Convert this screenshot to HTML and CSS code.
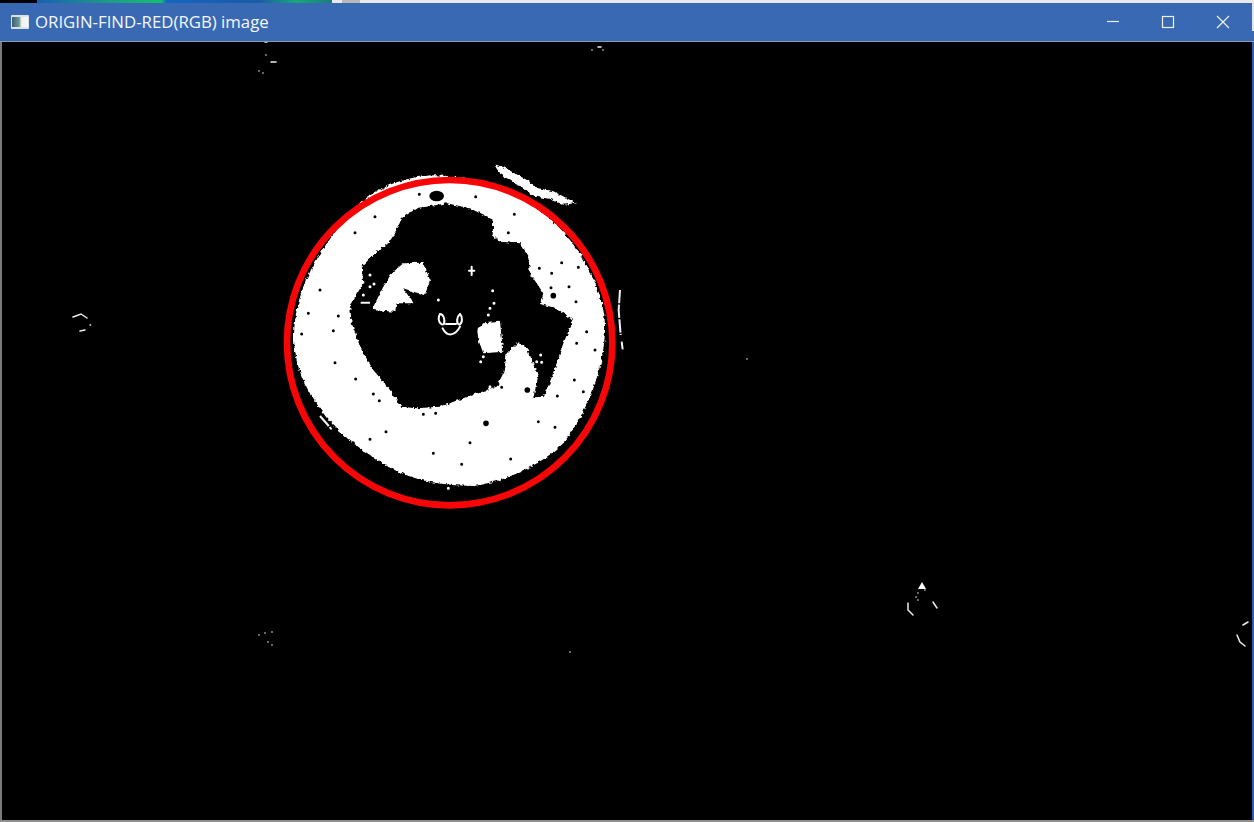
FILE: index.html
```html
<!DOCTYPE html>
<html lang="en">
<head>
<meta charset="utf-8">
<title>ORIGIN-FIND-RED(RGB) image</title>
<link rel="stylesheet" href="styles.css">
</head>
<body>
<div class="screen">
  <div class="backdrop">
    <div class="backdrop-dark"></div>
    <div class="backdrop-plot"></div>
    <div class="backdrop-light"><span class="backdrop-tab"></span></div>
  </div>
  <div class="window">
    <header class="titlebar">
      <svg class="app-icon" viewBox="0 0 18 14" aria-hidden="true">
        <defs>
          <linearGradient id="iconFill" x1="0" x2="1" y1="0" y2="0">
            <stop offset="0" stop-color="#3e5d73"/>
            <stop offset=".45" stop-color="#6f9a94"/>
            <stop offset=".6" stop-color="#eef3ee"/>
            <stop offset="1" stop-color="#f6f8f8"/>
          </linearGradient>
        </defs>
        <rect width="18" height="14" rx="1" fill="#d9e2ea"/>
        <rect x="1" y="2" width="16" height="10" fill="url(#iconFill)"/>
      </svg>
      <span class="title">ORIGIN-FIND-RED(RGB) image</span>
      <div class="controls">
        <span class="control">
          <svg viewBox="0 0 14 14" aria-hidden="true"><path class="glyph" d="M1 6.5H13"/></svg>
        </span>
        <span class="control">
          <svg viewBox="0 0 14 14" aria-hidden="true"><rect class="glyph" x="1.5" y="1.5" width="11" height="11"/></svg>
        </span>
        <span class="control">
          <svg viewBox="0 0 14 14" aria-hidden="true"><path class="glyph" d="M1 1L13 13M13 1L1 13"/></svg>
        </span>
      </div>
    </header>
    <div class="canvas">
      <svg class="picture" viewBox="2 42 1250 778" aria-label="Thresholded image with detected circle">
        <defs>
          <filter id="rough" x="-5%" y="-5%" width="110%" height="110%">
            <feTurbulence type="fractalNoise" baseFrequency="0.09" numOctaves="2" seed="4"/>
            <feDisplacementMap in="SourceGraphic" scale="13" xChannelSelector="R" yChannelSelector="G"/>
          </filter>
        </defs>
        <g transform="translate(270 160) scale(.33333)">
          <g filter="url(#rough)">
            <path class="white" d="M270 130C320 85 400 50 495 46C640 50 800 110 900 240C970 330 1008 430 1005 510C1002 630 950 760 880 850C800 925 700 965 610 978C520 975 420 965 330 905C260 860 190 810 150 745C100 680 75 610 72 540C72 400 130 280 270 130Z"/>
            <path class="black" d="M395 175L440 145L530 130L600 145L670 180L668 225L690 245L750 250L775 290L780 340L820 400L810 432L860 445L910 480L880 550L850 640L822 710L790 712L805 650L770 565L745 545L710 580L700 640L680 680L620 700L510 740L440 745L395 740L360 690L310 630L275 570L245 490L240 435L262 400L280 370L275 320L315 280L355 250L378 215Z"/>
            <path class="white" d="M305 450L340 380L365 340L400 310L460 308L480 360L465 405L430 395L400 385L430 430L380 430L375 455Z"/>
            <path class="white" d="M622 510L640 490L690 485L700 575L640 580L625 540Z"/>
            <path class="white" d="M672 12L702 22L738 42L775 62L805 85L850 94L885 112L918 130L880 134L838 116L798 110L765 90L728 66L688 40Z"/>
          </g>
          <ellipse class="black" cx="500" cy="108" rx="22" ry="16"/>
          <path class="dots-dark" d="M448 103h0M617 110h0M315 170h0M733 163h0M255 218h0M715 218h0M150 390h0M205 468h0M115 460h0M95 522h0M190 512h0M195 608h0M257 657h0M310 702h0M328 722h0M300 838h0M250 848h0M348 815h0M490 880h0M575 913h0M722 897h0M600 848h0M805 785h0M855 802h0M913 660h0M862 708h0M940 695h0M918 425h0M897 380h0M843 383h0M808 325h0M875 308h0M925 322h0M845 340h0M950 515h0M920 550h0M975 570h0M460 763h0M497 760h0M695 682h0M770 690h0"/>
          <path class="dots-dark-big" d="M648 790h0M850 407h0M772 690h0"/>
          <path class="line-white" d="M510 462C500 480 512 498 522 492C526 478 520 462 510 462ZM570 462C560 470 558 490 568 494C578 490 578 470 570 462ZM518 505C530 530 555 530 570 500M528 492H558M605 320V345M597 332H613"/>
          <path class="dots-white" d="M535 985h0M672 430h0M660 445h0M655 465h0M668 392h0M640 590h0M632 605h0M812 585h0M800 605h0M815 607h0M300 345h0M312 372h0M280 405h0M300 380h0M670 690h0M680 705h0M660 680h0M505 420h0"/>
          <path class="line-fine" d="M1050 390L1046 450L1052 525M1055 545L1058 568M150 768L185 808M272 428L300 428"/>
          <circle class="ring" cx="539" cy="548" r="488"/>
        </g>
        <g>
          <path class="line-thin" d="M73 317L81 314L87 318M90 325h.5M80 331L85 330"/>
          <path class="speck" d="M265 42h2M266 55h0M271 62h5M259 71h0M263 73h0M598 47h3M592 50h0M603 50h0M747 359h0M570 652h0M265 633h0M272 632h0M259 635h0M268 642h0M272 645h0M918 593h0M916 597h0M918 600h0M925 590h0"/>
          <path class="line-thin" d="M908 603L908 610L913 615M933 602L937 608"/>
          <path class="white" d="M922 582L926 589L918 589Z"/>
          <path class="line-thin" d="M1237 635L1240 642L1245 646M1243 625L1248 622"/>
        </g>
      </svg>
    </div>
  </div>
  <div class="edge"></div>
</div>
</body>
</html>
```
FILE: styles.css
```css
* { box-sizing: border-box; }
html, body { margin: 0; padding: 0; background: #000; overflow: hidden; }
.screen { position: relative; width: 1254px; height: 822px; display: flex; flex-direction: column; }
.backdrop { display: flex; height: 3px; flex: none; }
.backdrop-dark { width: 37px; background: #000; }
.backdrop-plot { width: 295px; background: linear-gradient(90deg, #1a5fb0 0%, #1f9c86 25%, #14c070 42%, #1466c0 44%, #1a5aa8 75%, #1aa878 88%, #1d7a80 100%); }
.backdrop-light { flex: 1; background: #e9e9ec; padding-left: 10px; }
.backdrop-tab { display: block; width: 18px; height: 3px; background: #b9b9b9; }
.window { flex: 1; display: flex; flex-direction: column; min-height: 0; background: #000; border-bottom: 2px solid #8f8f8f; }
.titlebar { flex: none; height: 39px; background: #3a69b4; border-bottom: 1px solid #8d9cb6; display: flex; align-items: center; padding-left: 11px; color: #fff; }
.app-icon { width: 18px; height: 14px; margin-right: 6px; flex: none; }
.title { font-family: "Open Sans", "Noto Sans", sans-serif; font-size: 16.8px; line-height: 20px; color: #f4f8ff; }
.controls { margin-left: auto; display: flex; margin-right: 4px; }
.control { width: 55px; height: 38px; display: flex; align-items: center; justify-content: center; }
.control svg { width: 14px; height: 14px; display: block; }
.glyph { fill: none; stroke: #eef3fb; stroke-width: 1.2; }
.canvas { flex: 1; min-height: 0; border-left: 2px solid #7a7a7a; border-right: 2px solid #2d5fae; background: #000; }
.picture { display: block; width: 1250px; height: 778px; }
.white { fill: #fff; }
.black { fill: #000; }
.ring { fill: none; stroke: #f60606; stroke-width: 20; }
.dots-dark { fill: none; stroke: #000; stroke-width: 9; stroke-linecap: round; }
.dots-dark-big { fill: none; stroke: #000; stroke-width: 17; stroke-linecap: round; }
.dots-white { fill: none; stroke: #fff; stroke-width: 9; stroke-linecap: round; }
.line-white { fill: none; stroke: #fff; stroke-width: 6; stroke-linecap: round; }
.line-fine { fill: none; stroke: #f2f2f2; stroke-width: 6; stroke-dasharray: 40 4; }
.line-thin { fill: none; stroke: #ededed; stroke-width: 1.5; stroke-linecap: round; }
.speck { fill: none; stroke: #eee; stroke-width: 1.6; stroke-linecap: round; }
.edge { position: absolute; right: 0; top: 3px; width: 2px; height: 28px; background: #e4e6ea; }
```
